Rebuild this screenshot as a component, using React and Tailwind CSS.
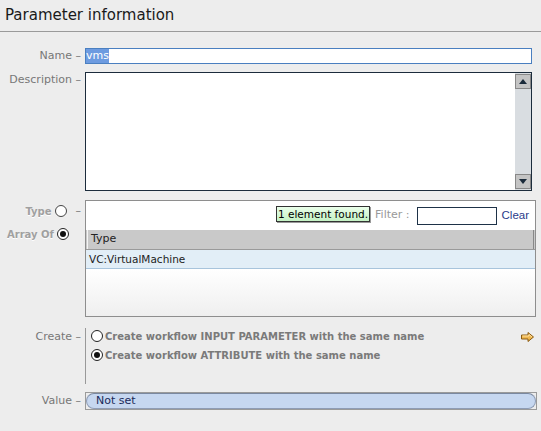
import React from "react";

function Radio({ checked, className = "" }) {
  return (
    <span className={"inline-flex items-center justify-center w-[12px] h-[12px] rounded-full border border-[#222] bg-white shrink-0 " + className}>
      {checked && <span className="w-[6px] h-[6px] rounded-full bg-[#111]" />}
    </span>
  );
}

function Arrow() {
  return (
    <svg width="13" height="10" viewBox="0 0 13 10">
      <path d="M0.5 3 H7 V0.5 L12.5 5 L7 9.5 V7 H0.5 Z" fill="#f0b850" stroke="#8a5a10" strokeWidth="1" />
      <path d="M1.5 4 H8 V2.5 L11 5" fill="none" stroke="#ffe0a0" strokeWidth="1" />
    </svg>
  );
}

export default function App() {
  const label = "w-[85px] shrink-0 text-right pr-[4px] text-[#777] text-[11px]";
  return (
    <div className="w-[541px] h-[431px] bg-[#ededed] overflow-hidden font-['DejaVu_Sans',sans-serif] text-[11px]">
      <div className="h-[32px] border-b border-[#9a9a9a] pl-[5px] pt-[5px] text-[15px] leading-[20px] text-[#1a1a1a]">
        Parameter information
      </div>

      {/* Name */}
      <div className="flex items-center mt-[16px] h-[16px]">
        <div className={label}>Name –</div>
        <div className="w-[447px] h-[16px] border border-[#4a7fc0] bg-white flex items-center">
          <span className="bg-[#6d9be0] text-white leading-[14px]">vms</span>
        </div>
      </div>

      {/* Description */}
      <div className="flex mt-[8px]">
        <div className={label + " pt-[1px] leading-[14px]"}>Description –</div>
        <div className="w-[447px] h-[119px] border border-[#1c2c3c] bg-white flex justify-end">
          <div className="w-[16px] h-full bg-[#d9dde1] flex flex-col justify-between pt-[1px] pb-[1px]">
            <div className="h-[15px] bg-[#c4c4c4] border border-[#888] flex items-center justify-center">
              <svg width="8" height="5" viewBox="0 0 8 5"><path d="M0 5 L4 0 L8 5 Z" fill="#1a2a3a" /></svg>
            </div>
            <div className="h-[15px] bg-[#c4c4c4] border border-[#888] flex items-center justify-center">
              <svg width="8" height="5" viewBox="0 0 8 5"><path d="M0 0 L4 5 L8 0 Z" fill="#1a2a3a" /></svg>
            </div>
          </div>
        </div>
      </div>

      {/* Type */}
      <div className="flex mt-[9px]">
        <div className="w-[85px] shrink-0 flex flex-col text-[#a0a0a0] font-bold text-[10px]">
          <div className="flex items-center justify-end h-[12px] mt-[5px] pr-[4px]">
            <span className="[text-shadow:0_1px_0_#fff]">Type</span>
            <Radio className="ml-[3px] border-[#444]" />
            <span className="ml-[9px] text-[#777] font-normal text-[11px]">–</span>
          </div>
          <div className="flex items-center h-[12px] mt-[11px] pl-[7px]">
            <span className="[text-shadow:0_1px_0_#fff]">Array Of</span>
            <Radio checked className="ml-[3px]" />
          </div>
        </div>
        <div className="w-[451px] h-[117px] border border-[#8e8e8e] bg-white flex flex-col">
          <div className="h-[29px] flex items-center justify-end pr-[6px]">
            <div className="mr-[5px] mb-[4px]">
              <div className="h-[16px] px-[1px] border border-[#333] bg-gradient-to-b from-[#eaffea] to-[#c4f2c4] text-black text-[10.5px] leading-[14px] shadow-[1px_1px_0_#999]">
                1 element found.
              </div>
            </div>
            <span className="text-[#999] mr-[7px]">Filter :</span>
            <div className="w-[80px] h-[18px] border border-[#1e3248] bg-white mr-[5px]" />
            <span className="text-[#2a3b8a] text-[11.5px] font-['Liberation_Sans',sans-serif]">Clear</span>
          </div>
          <div className="h-[20px] bg-[#c9c9c9] border-b border-[#9a9a9a] flex items-center">
            <div className="w-[1px] h-full bg-[#f4f4f4] ml-[1px]" />
            <span className="ml-[3px] text-[#222] flex-1">Type</span>
            <div className="w-[1px] h-full bg-[#888] mr-[1px]" />
          </div>
          <div className="h-[19px] bg-[#e2eef7] border-b border-[#a8c4dc] flex items-center pl-[3px] pt-[1px] text-[#222] text-[10.5px]">
            VC:VirtualMachine
          </div>
          <div className="flex-1 bg-gradient-to-b from-white to-[#efefef]" />
        </div>
      </div>

      {/* Create */}
      <div className="flex mt-[11px] h-[56px]">
        <div className={label + " pt-[2px] leading-[14px]"}>Create –</div>
        <div className="w-[452px] border-l border-[#999] flex flex-col pl-[5px] pt-[2px] font-bold text-[10px] text-[#7a7a7a]">
          <div className="flex items-center h-[12px]">
            <Radio />
            <span className="ml-[2px] flex-1">Create workflow INPUT PARAMETER with the same name</span>
            <span className="mr-[3px] mt-[2px]"><Arrow /></span>
          </div>
          <div className="flex items-center h-[12px] mt-[7px]">
            <Radio checked />
            <span className="ml-[2px]">Create workflow ATTRIBUTE with the same name</span>
          </div>
        </div>
      </div>

      {/* Value */}
      <div className="flex items-center mt-[8px] h-[18px]">
        <div className={label}>Value –</div>
        <div className="w-[452px] h-[18px] border border-[#9a9a9a] bg-[#ededed] flex">
          <div className="flex-1 rounded-full bg-[#c6d7f0] border border-[#8e9cb5] border-t-[#7a88a0] flex items-center pl-[9px] text-[#1a2a5a] text-[11px]">
            Not set
          </div>
        </div>
      </div>
    </div>
  );
}
